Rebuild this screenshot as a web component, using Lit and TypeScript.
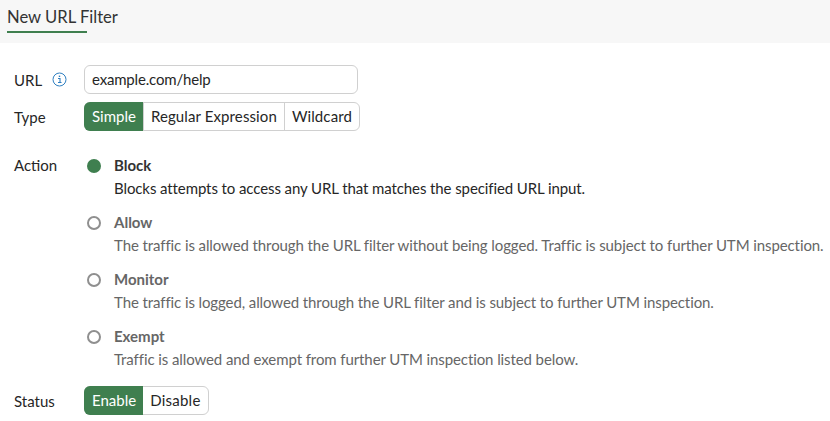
import { LitElement, html, css } from "lit";
import { customElement } from "lit/decorators.js";

const ACTIONS = [
  { name: "Block", desc: "Blocks attempts to access any URL that matches the specified URL input.", on: true },
  { name: "Allow", desc: "The traffic is allowed through the URL filter without being logged. Traffic is subject to further UTM inspection.", on: false },
  { name: "Monitor", desc: "The traffic is logged, allowed through the URL filter and is subject to further UTM inspection.", on: false },
  { name: "Exempt", desc: "Traffic is allowed and exempt from further UTM inspection listed below.", on: false },
];

@customElement("app-root")
export class AppRoot extends LitElement {
  static styles = css`
    :host { display: block; width: 830px; height: 421px; overflow: hidden; background: #fff; color: #262626; font: 15px/20px Lato, sans-serif; }
    .head { height: 43px; background: #f7f7f7; padding-left: 7px; box-sizing: border-box; }
    .title { display: inline-block; width: 80px; height: 33px; box-sizing: border-box; border-bottom: 2px solid #3f7f4f; font-size: 16.6px; line-height: 35px; white-space: nowrap; color: #333; }
    .form { padding: 22px 0 0 14px; }
    .row { display: flex; align-items: center; margin-bottom: 8px; }
    .label { width: 70px; flex: none; display: flex; align-items: center; gap: 10px; }
    .label svg { display: block; }
    .input { width: 274px; height: 29px; box-sizing: border-box; border: 1px solid #d0d0d0; border-radius: 6px; padding-left: 7px; line-height: 27px; letter-spacing: -0.18px; }
    .seg { display: flex; height: 29px; box-sizing: border-box; border: 1px solid #d0d0d0; border-radius: 6px; }
    .seg span { padding: 0 7px; line-height: 27px; border-left: 1px solid #d0d0d0; letter-spacing: 0.11px; }
    .seg span:first-child { border-left: 0; letter-spacing: 0; }
    .seg span.on { background: #3f7f4f; color: #fff; margin: -1px 0 -1px -1px; padding: 1px 7px 1px 8px; border-radius: 6px 0 0 6px; }
    .seg .plain { border-left: 0; letter-spacing: 0.25px; }
    .action { align-items: flex-start; margin: 24px 0 0; }
    .opts { display: flex; flex-direction: column; gap: 14px; }
    .opt { display: grid; grid-template-columns: 30px 1fr; row-gap: 3px; }
    .radio { width: 14px; height: 14px; box-sizing: border-box; border: 2px solid #8f8f8f; border-radius: 50%; margin: 4px 0 0 3px; }
    .radio.on { border: 0; background: #3f7f4f; }
    .name { font-weight: 700; color: #666; }
    .on-opt .name { color: #333; }
    .desc { grid-column: 2; white-space: nowrap; color: #666; letter-spacing: -0.095px; }
    .on-opt .desc { color: #262626; }
    .status { margin: 17px 0 0; }
  `;

  render() {
    return html`
      <div class="head"><div class="title">New URL Filter</div></div>
      <div class="form">
        <div class="row">
          <div class="label">URL
            <svg width="15" height="15" viewBox="0 0 15 15" fill="none" stroke="#2f7fc1">
              <circle cx="7.5" cy="7.5" r="6.5"/>
              <path d="M6 6.5h2v4M6 10.5h3.5" stroke-width="1.1"/>
              <path d="M7.5 3.6v1.4" stroke-width="1.4"/>
            </svg>
          </div>
          <div class="input">example.com/help</div>
        </div>
        <div class="row">
          <div class="label">Type</div>
          <div class="seg"><span class="on">Simple</span><span>Regular Expression</span><span>Wildcard</span></div>
        </div>
        <div class="row action">
          <div class="label">Action</div>
          <div class="opts">
            ${ACTIONS.map(a => html`
              <div class="opt ${a.on ? "on-opt" : ""}">
                <div class="radio ${a.on ? "on" : ""}"></div>
                <div class="name">${a.name}</div>
                <div class="desc">${a.desc}</div>
              </div>`)}
          </div>
        </div>
        <div class="row status">
          <div class="label">Status</div>
          <div class="seg"><span class="on">Enable</span><span class="plain">Disable</span></div>
        </div>
      </div>
    `;
  }
}
